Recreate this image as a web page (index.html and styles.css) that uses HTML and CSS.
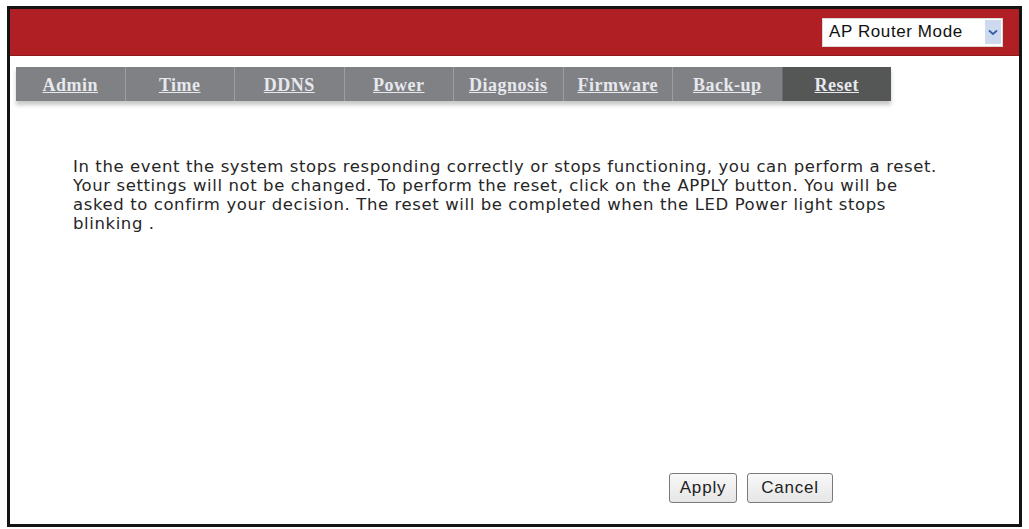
FILE: index.html
```html
<!DOCTYPE html>
<html>
<head>
<meta charset="utf-8">
<link rel="stylesheet" href="styles.css">
</head>
<body>
<div class="frame">
  <div class="header">
    <div class="mode-select">
      <span class="mode-text">AP Router Mode</span>
      <span class="mode-arrow"><svg width="10" height="7" viewBox="0 0 10 7"><path d="M1 1.5 L5 5 L9 1.5" fill="none" stroke="#3a5fa8" stroke-width="1.8"/></svg></span>
    </div>
  </div>
  <div class="tabs">
    <a class="tab">Admin</a>
    <a class="tab">Time</a>
    <a class="tab">DDNS</a>
    <a class="tab">Power</a>
    <a class="tab">Diagnosis</a>
    <a class="tab">Firmware</a>
    <a class="tab">Back-up</a>
    <a class="tab active">Reset</a>
  </div>
  <p class="desc">In the event the system stops responding correctly or stops functioning, you can perform a reset. Your settings will not be changed. To perform the reset, click on the APPLY button. You will be asked to confirm your decision. The reset will be completed when the LED Power light stops blinking .</p>
  <div class="actions">
    <button class="btn btn-apply">Apply</button>
    <button class="btn btn-cancel">Cancel</button>
  </div>
</div>
</body>
</html>
```
FILE: styles.css
```css
html, body {
  margin: 0;
  padding: 0;
  background: #ffffff;
}
body {
  padding: 6px 7px 0 7px;
}
.frame {
  box-sizing: border-box;
  width: 1015px;
  height: 521px;
  border: 3px solid #141414;
  display: flex;
  flex-direction: column;
  background: #ffffff;
}
.header {
  height: 46px;
  background: #b01f24;
  border-bottom: 1px solid #8e1a1d;
  display: flex;
  justify-content: flex-end;
  align-items: center;
  padding-right: 16px;
}
.mode-select {
  box-sizing: border-box;
  width: 181px;
  height: 29px;
  background: #ffffff;
  border: 1px solid #d8d8d8;
  display: flex;
  align-items: center;
  justify-content: space-between;
  padding-left: 6px;
  padding-right: 1px;
}
.mode-text {
  font-family: "Liberation Sans", Arial, sans-serif;
  font-size: 17px;
  color: #111;
  letter-spacing: 0.6px;
}
.mode-arrow {
  width: 16px;
  height: 24px;
  background: #cdd9ee;
  display: flex;
  align-items: center;
  justify-content: center;
}
.tabs {
  margin: 11px 0 0 6px;
  width: 875px;
  height: 34px;
  display: flex;
  background: #808184;
  box-shadow: 0 4px 4px rgba(0,0,0,0.22);
}
.tab {
  flex: 1;
  display: flex;
  align-items: center;
  justify-content: center;
  padding-top: 3px;
  font-family: "Liberation Serif", "Times New Roman", serif;
  font-weight: bold;
  font-size: 18px;
  letter-spacing: 0.5px;
  color: #e6e8ee;
  text-decoration: underline;
  border-left: 1px solid #9c9da0;
}
.tab:first-child {
  border-left: none;
}
.tab.active {
  background: #555656;
  border-left: 1px solid #6a6a6a;
}
.desc {
  margin: 56px 0 0 63px;
  width: 878px;
  font-family: "DejaVu Sans", Verdana, sans-serif;
  font-size: 16.5px;
  letter-spacing: 0.6px;
  line-height: 19px;
  color: #262626;
}
.actions {
  margin-top: auto;
  padding: 0 0 21px 659px;
  display: flex;
  gap: 10px;
}
.btn {
  box-sizing: border-box;
  height: 30px;
  font-family: "Liberation Sans", Arial, sans-serif;
  font-size: 17px;
  letter-spacing: 0.8px;
  color: #222;
  background: linear-gradient(#f8f8f8, #e6e6e6);
  border: 1px solid #7a7a7a;
  border-radius: 3px;
  padding: 0;
}
.btn-apply { width: 68px; }
.btn-cancel { width: 86px; }
```
